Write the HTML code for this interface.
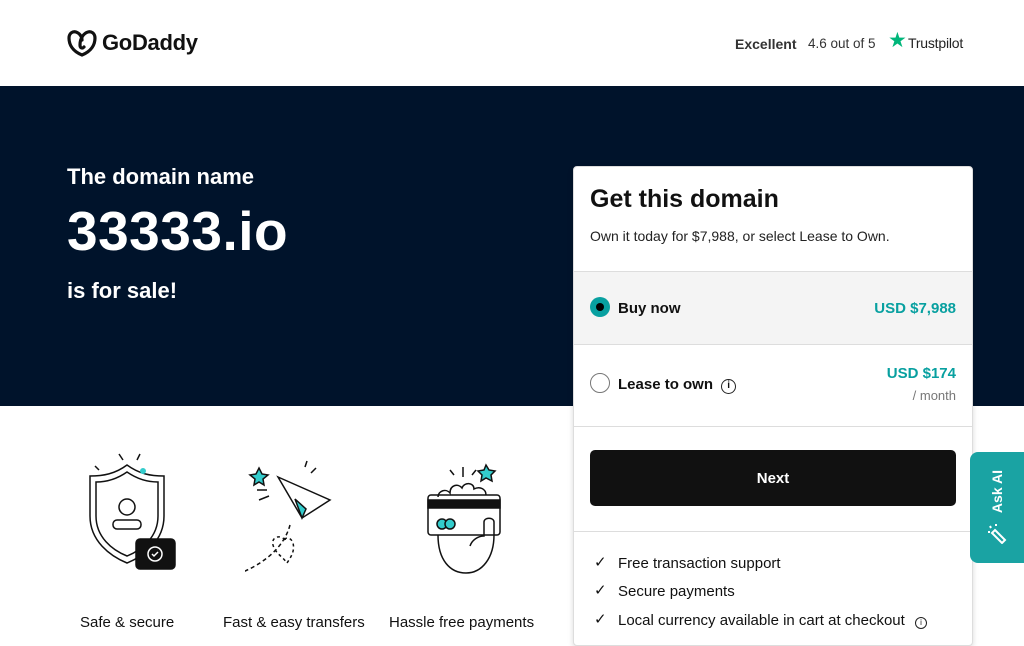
<!DOCTYPE html>
<html><head><style>
*{margin:0;padding:0;box-sizing:border-box}
body{width:1024px;height:629px;overflow:hidden;background:#fff;font-family:"Liberation Sans",sans-serif;color:#111;position:relative}
.hdr{height:86px;position:relative}
.hero{position:absolute;top:86px;left:0;width:1024px;height:320px;background:#00132b;color:#fff}
.card{position:absolute;left:573px;top:166px;width:400px;height:480px;background:#fff;border:1px solid #ddd;border-radius:4px;box-shadow:0 2px 6px rgba(0,0,0,.15)}
.abs{position:absolute}
.teal{color:#08a0a0;font-weight:bold}
.feat{position:absolute;top:614px;font-size:15px;color:#111}
.chk{position:absolute;left:20px;font-size:15px}
</style></head><body>
<div class="hdr">
 <svg class="abs" style="left:67px;top:29px" width="30" height="28" viewBox="0 0 30 28"><path d="M15 26C5 22 2 15 2 9 2 4 6 2 9 3c3 1 6 4 6 8M15 26c10-4 13-11 13-17 0-5-4-7-7-6-4 1-8 6-8 13 0 3 2 4 4 2" fill="none" stroke="#111" stroke-width="3.2" stroke-linecap="round"/></svg>
 <div class="abs" style="left:102px;top:30px;font-size:22px;font-weight:bold;letter-spacing:-0.3px">GoDaddy</div>
 <div class="abs" style="left:735px;top:36px;font-size:14px;font-weight:bold;color:#333">Excellent</div>
 <div class="abs" style="left:808px;top:36px;font-size:13.5px;color:#333">4.6 out of 5</div>
 <div class="abs" style="left:888px;top:28px;font-size:21px;color:#00b67a">★</div>
 <div class="abs" style="left:908px;top:35px;font-size:14px;color:#222;letter-spacing:-0.2px">Trustpilot</div>
</div>
<div class="hero">
 <div class="abs" style="left:67px;top:78px;font-size:22px;font-weight:bold">The domain name</div>
 <div class="abs" style="left:67px;top:113px;font-size:55px;font-weight:bold;letter-spacing:0.5px">33333.io</div>
 <div class="abs" style="left:67px;top:192px;font-size:22px;font-weight:bold">is for sale!</div>
</div>
<div class="card">
 <div class="abs" style="left:16px;top:18px;font-size:25px;font-weight:bold">Get this domain</div>
 <div class="abs" style="left:16px;top:61px;font-size:14px;color:#222">Own it today for $7,988, or select Lease to Own.</div>
 <div class="abs" style="left:0;top:104px;width:398px;height:74px;background:#f4f4f4;border-top:1px solid #ddd;border-bottom:1px solid #ddd"></div>
 <div class="abs" style="left:16px;top:130px;width:20px;height:20px;border-radius:50%;background:#08a0a0"><div style="margin:6px;width:8px;height:8px;border-radius:50%;background:#000"></div></div>
 <div class="abs" style="left:44px;top:133px;font-size:15px;font-weight:bold">Buy now</div>
 <div class="abs teal" style="right:16px;top:133px;font-size:15px">USD $7,988</div>
 <div class="abs" style="left:16px;top:206px;width:20px;height:20px;border-radius:50%;border:1px solid #777"></div>
 <div class="abs" style="left:44px;top:209px;font-size:15px;font-weight:bold">Lease to own <span style="display:inline-block;width:15px;height:15px;border:1.5px solid #222;border-radius:50%;font-size:10px;text-align:center;line-height:12px;vertical-align:1px;margin-left:4px">i</span></div>
 <div class="abs teal" style="right:16px;top:198px;font-size:15px">USD $174</div>
 <div class="abs" style="right:16px;top:221px;font-size:13px;color:#777">/ month</div>
 <div class="abs" style="left:0;top:259px;width:398px;border-top:1px solid #ddd"></div>
 <div class="abs" style="left:16px;top:283px;width:366px;height:56px;background:#111;border-radius:5px;color:#fff;font-weight:bold;font-size:15px;text-align:center;line-height:58px">Next</div>
 <div class="abs" style="left:0;top:364px;width:398px;border-top:1px solid #ddd"></div>
 <div class="chk" style="top:386px">✓</div><div class="abs" style="left:44px;top:388px;font-size:15px">Free transaction support</div>
 <div class="chk" style="top:414px">✓</div><div class="abs" style="left:44px;top:416px;font-size:15px">Secure payments</div>
 <div class="chk" style="top:443px">✓</div><div class="abs" style="left:44px;top:445px;font-size:15px">Local currency available in cart at checkout <span style="display:inline-block;width:12px;height:12px;border:1px solid #222;border-radius:50%;font-size:8px;text-align:center;line-height:10px;margin-left:6px">i</span></div>
</div>
<div class="abs" style="left:970px;top:452px;width:60px;height:111px;background:#1aa3a3;border-radius:8px 0 0 8px">
 <div class="abs" style="left:19px;top:18px;writing-mode:vertical-rl;transform:rotate(180deg);color:#fff;font-weight:bold;font-size:14px;white-space:nowrap">Ask AI</div>
 <svg class="abs" style="left:17px;top:70px" width="20" height="22" viewBox="0 0 20 22" fill="none" stroke="#fff" stroke-width="2"><path d="M8 8l10 10-3 3L5 11zM3 4l1 2M1 10h2M9 2v2"/></svg>
</div>
<svg class="abs" style="left:75px;top:452px" width="110" height="130" viewBox="0 0 110 130" fill="none" stroke="#111" stroke-width="1.5">
 <path d="M52 13C40 22 28 24 15 24v40c0 25 20 40 37 47 17-7 37-22 37-47V24C76 24 64 22 52 13z"/>
 <path d="M52 20C42 27 32 30 21 30v34c0 21 16 34 31 40 15-6 31-19 31-40V30C72 30 62 27 52 20z"/>
 <circle cx="52" cy="55" r="8"/><rect x="38" y="68" width="28" height="9" rx="4"/>
 <rect x="61" y="87" width="39" height="30" rx="4" fill="#111"/><circle cx="80" cy="102" r="7" stroke="#fff"/><path d="M77 102l2 2 4-4" stroke="#fff"/>
 <circle cx="68" cy="19" r="3" fill="#3cc" stroke="none"/>
 <path d="M62 8l3-6M48 8l-4-6M20 14l4 4" />
</svg>
<svg class="abs" style="left:245px;top:455px" width="100" height="130" viewBox="0 0 100 130" fill="none" stroke="#111" stroke-width="1.5">
 <path d="M33 22l52 23-28 18z"/><path d="M50 44l7 19 4-9z" fill="#3cc"/><path d="M45 70c-8 30-40 45-55 50" stroke-dasharray="4 3"/>
 <path d="M40 85c-5-6-14-3-12 5 2 8 10 12 14 18 4-6 8-12 6-20-2-6-8-6-8-3" stroke-dasharray="3 3"/>
 <path d="M14 13l3 6 6 1-5 4 1 6-5-3-5 3 1-6-5-4 6-1z" fill="#3cc"/>
 <path d="M12 35h10M14 45l10-4M60 12l2-6M66 18l5-5"/>
</svg>
<svg class="abs" style="left:418px;top:455px" width="100" height="130" viewBox="0 0 100 130" fill="none" stroke="#111" stroke-width="1.5">
 <path d="M20 42c0-6 8-9 12-4 0-8 8-10 12-5 2-6 12-6 12 1 6-3 12 0 12 6"/>
 <rect x="10" y="40" width="72" height="40" rx="3"/><rect x="10" y="45" width="72" height="8" fill="#111"/>
 <circle cx="24" cy="69" r="5" fill="#3cc"/><circle cx="32" cy="69" r="5" fill="#3cc"/>
 <path d="M20 80c0 25 12 38 28 38s28-15 28-38V67c0-5-10-5-10 0v14c-6 0-12 4-14 10"/>
 <path d="M68 10l3 5 6 1-4 4 1 6-6-3-5 3 1-6-4-4 6-1z" fill="#3cc"/>
 <path d="M45 22v-10M36 20l-4-5M54 20l4-5"/>
</svg>
<div class="feat" style="left:80px">Safe &amp; secure</div>
<div class="feat" style="left:223px">Fast &amp; easy transfers</div>
<div class="feat" style="left:389px">Hassle free payments</div>
</body></html>
